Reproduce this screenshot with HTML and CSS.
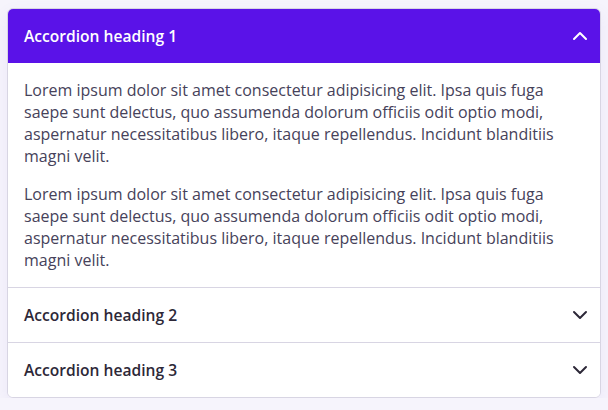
FILE: index.html
```html
<!DOCTYPE html>
<html>
<head>
<meta charset="utf-8">
<link rel="stylesheet" href="styles.css">
</head>
<body>
<div class="accordion">
  <div class="item open">
    <button class="head">
      <span>Accordion heading 1</span>
      <svg class="chev" width="16" height="16" viewBox="0 0 16 16"><path d="M2 11 L8 5 L14 11" fill="none" stroke="currentColor" stroke-width="2" stroke-linecap="round" stroke-linejoin="round"/></svg>
    </button>
    <div class="body">
      <p>Lorem ipsum dolor sit amet consectetur adipisicing elit. Ipsa quis fuga saepe sunt delectus, quo assumenda dolorum officiis odit optio modi, aspernatur necessitatibus libero, itaque repellendus. Incidunt blanditiis magni velit.</p>
      <p>Lorem ipsum dolor sit amet consectetur adipisicing elit. Ipsa quis fuga saepe sunt delectus, quo assumenda dolorum officiis odit optio modi, aspernatur necessitatibus libero, itaque repellendus. Incidunt blanditiis magni velit.</p>
    </div>
  </div>
  <div class="item">
    <button class="head">
      <span>Accordion heading 2</span>
      <svg class="chev" width="16" height="16" viewBox="0 0 16 16"><path d="M2 5 L8 11 L14 5" fill="none" stroke="currentColor" stroke-width="2" stroke-linecap="round" stroke-linejoin="round"/></svg>
    </button>
  </div>
  <div class="item">
    <button class="head">
      <span>Accordion heading 3</span>
      <svg class="chev" width="16" height="16" viewBox="0 0 16 16"><path d="M2 5 L8 11 L14 5" fill="none" stroke="currentColor" stroke-width="2" stroke-linecap="round" stroke-linejoin="round"/></svg>
    </button>
  </div>
</div>
</body>
</html>
```
FILE: styles.css
```css
html, body { margin: 0; }
body {
  background: #f6f4fc;
  padding: 8px 7px 0 7px;
  font-family: "Open Sans", Lato, sans-serif;
  color: #3a3647;
}
.accordion {
  background: #fff;
  border: 1px solid #d8d5e3;
  border-radius: 6px;
  overflow: hidden;
  box-shadow: 0 6px 16px rgba(120, 100, 200, 0.09);
}
.item + .item { border-top: 1px solid #d8d5e3; }
.head {
  display: flex;
  align-items: center;
  justify-content: space-between;
  width: 100%;
  height: 54px;
  padding: 0 12px 0 16px;
  border: 0;
  background: #fff;
  font-family: inherit;
  font-size: 15.6px;
  font-weight: 600;
  color: #2d2838;
  text-align: left;
  cursor: pointer;
}
.open .head { background: #5a12e8; color: #fff; }
.chev { display: block; }
.body {
  padding: 16px 20px 16px 16px;
  font-size: 16px;
  line-height: 22px;
  color: #46425a;
}
.body p { margin: 0; }
.body p + p { margin-top: 16px; }
```
